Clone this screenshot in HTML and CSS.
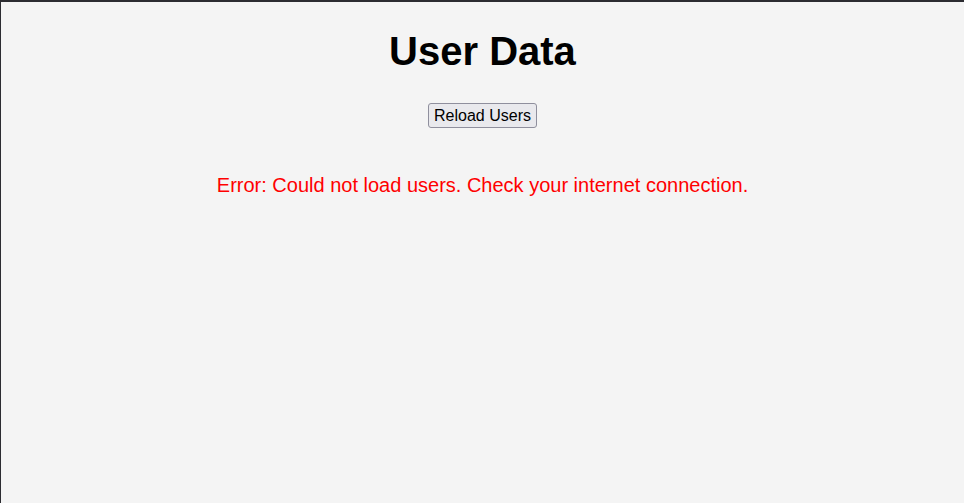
FILE: index.html
```html
<!DOCTYPE html>
<html lang="en">
<head>
<meta charset="utf-8">
<title>User Data</title>
<link rel="stylesheet" href="styles.css">
</head>
<body>
<main class="page">
  <h1 class="title">User Data</h1>
  <button class="reload" type="button">Reload Users</button>
  <p class="error">Error: Could not load users. Check your internet connection.</p>
</main>
</body>
</html>
```

FILE: styles.css
```css
html {
  height: 100%;
  box-sizing: border-box;
  border-top: 2px solid #2c2c31;
  border-left: 1px solid #2c2c31;
  background: #f4f4f4;
}
body {
  margin: 0;
  font-family: "Liberation Sans", Arial, sans-serif;
  color: #000;
}
.page {
  display: flex;
  flex-direction: column;
  align-items: center;
  padding-top: 26px;
  text-align: center;
}
.title {
  margin: 0;
  font-size: 40px;
  font-weight: bold;
  line-height: 46px;
}
.reload {
  margin-top: 29px;
  font-family: "Liberation Sans", Arial, sans-serif;
  font-size: 16px;
  line-height: 19px;
  padding: 2px 5px;
  border: 1px solid #8f8f9d;
  border-radius: 3px;
  background: #e9e9ed;
  color: #000;
}
.error {
  margin: 46px 0 0;
  color: #ff0000;
  font-size: 20px;
  line-height: 23px;
}
```
